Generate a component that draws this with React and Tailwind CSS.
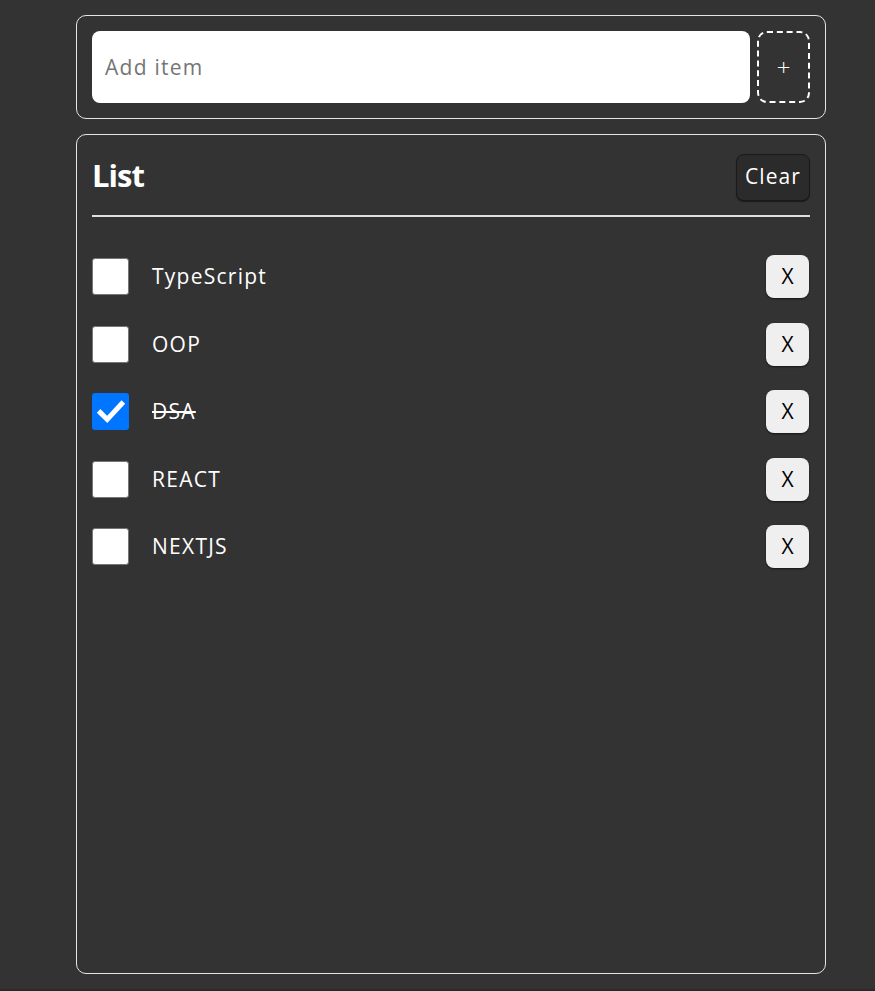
import React, { useState } from "react";

const font = { fontFamily: '"Open Sans", "Noto Sans", sans-serif' };

export default function App() {
  const [items, setItems] = useState([
    { t: "TypeScript", d: false },
    { t: "OOP", d: false },
    { t: "DSA", d: true },
    { t: "REACT", d: false },
    { t: "NEXTJS", d: false },
  ]);
  return (
    <div className="bg-[#2a2a2a] min-h-[991px]" style={font}>
      <div className="bg-[#333333] h-[989px] pt-[15px] pl-[76px] flex flex-col gap-[15px]">
        <div className="w-[750px] h-[104px] border border-[#e5e5e5] rounded-[10px] p-[15px] flex gap-[7px]">
          <input
            placeholder="Add item"
            className="flex-1 h-[72px] bg-white rounded-[8px] px-[13px] text-[21px] tracking-[0.06em] text-[#222] placeholder:text-[#757575] outline-none"
          />
          <button className="w-[53px] h-[72px] border-2 border-dashed border-white rounded-[10px] text-white text-[24px] font-light flex items-center justify-center">
            +
          </button>
        </div>
        <div className="w-[750px] h-[840px] border border-[#e5e5e5] rounded-[10px] px-[15px] pt-[18px] flex flex-col">
          <div className="flex items-center justify-between h-[48px]">
            <h1 className="text-white text-[31px] font-bold tracking-[-1px] leading-none -mt-[4px]">List</h1>
            <button className="h-[47px] w-[74px] bg-[#2b2b2b] border border-[#1a1a1a] rounded-[8px] text-white text-[21px] tracking-[0.05em] shadow-[0_1px_1px_rgba(0,0,0,0.5)]">
              Clear
            </button>
          </div>
          <div className="mt-[14px] h-[2px] bg-[#e0e0e0]" />
          <ul className="mt-[38px] flex flex-col gap-[24px]">
            {items.map((it, i) => (
              <li key={i} className="flex items-center h-[43.5px]">
                <button
                  onClick={() =>
                    setItems(items.map((x, j) => (j === i ? { ...x, d: !x.d } : x)))
                  }
                  className={
                    it.d
                      ? "w-[37px] h-[37px] rounded-[3px] bg-[#0075ff] flex items-center justify-center"
                      : "w-[37px] h-[37px] rounded-[3px] bg-white border border-[#767676]"
                  }
                >
                  {it.d && (
                    <svg width="30" height="30" viewBox="0 0 24 24">
                      <path d="M3.5 12.5 L9 18 L20.5 5.5" fill="none" stroke="white" strokeWidth="4" strokeLinecap="square" />
                    </svg>
                  )}
                </button>
                <span
                  className={
                    "ml-[23px] flex-1 text-white text-[21px] tracking-[0.06em] " + (it.d ? "line-through" : "")
                  }
                >
                  {it.t}
                </span>
                <button className="w-[43px] h-[43px] mr-[1px] bg-[#efefef] rounded-[8px] text-black text-[21px] shadow-[0_1px_2px_rgba(0,0,0,0.6)] flex items-center justify-center">
                  X
                </button>
              </li>
            ))}
          </ul>
        </div>
      </div>
    </div>
  );
}
